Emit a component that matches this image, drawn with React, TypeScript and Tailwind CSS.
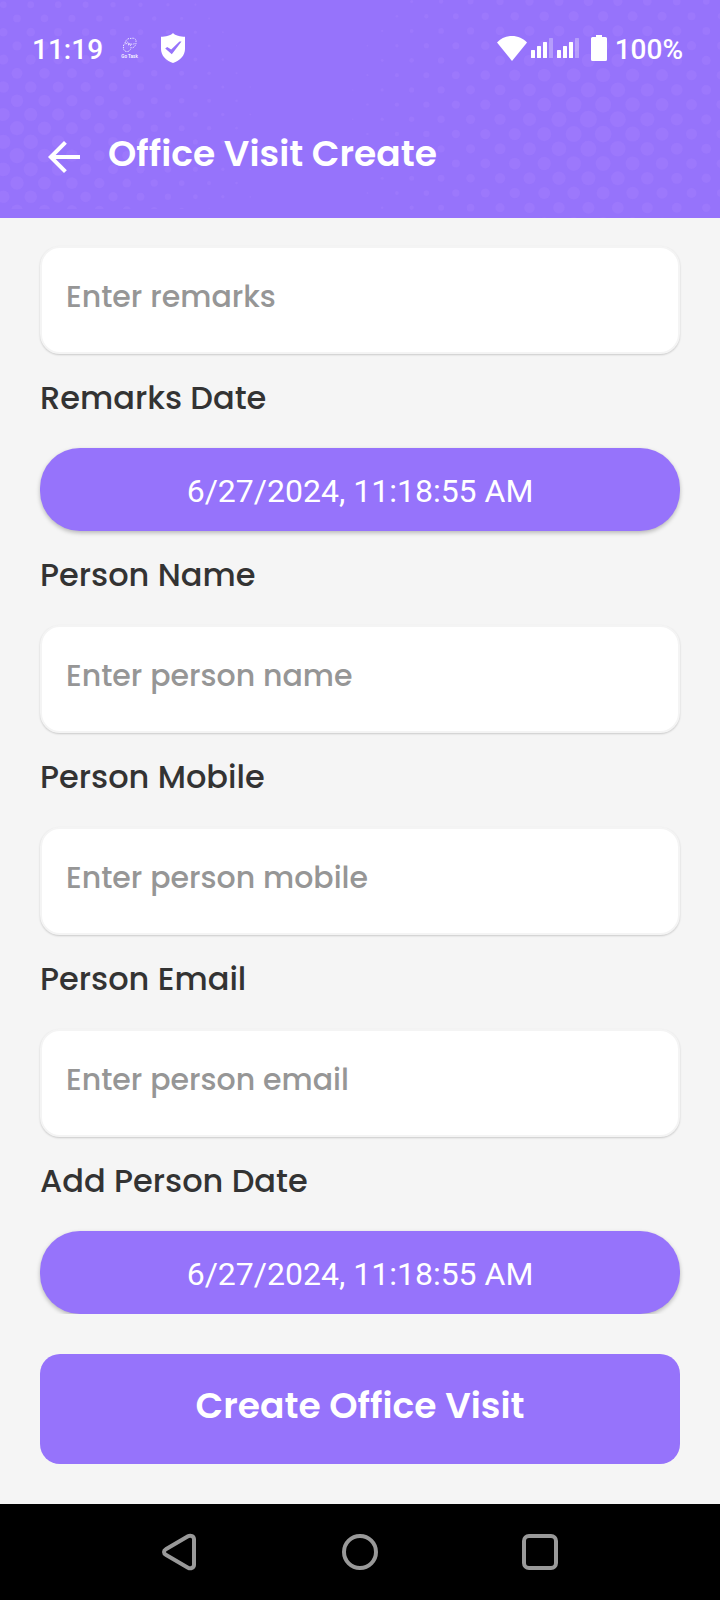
type Dot = { x: number; y: number; r: number };

function halftone(x0: number, y0: number, step: number, cx: number, cy: number, peak: number, slope: number, minX: number, maxX: number): Dot[] {
  const dots: Dot[] = [];
  for (let row = 0; y0 + row * step < 226; row++) {
    const y = y0 + row * step;
    for (let x = x0 + (row % 2) * step; x < maxX; x += step * 2) {
      const r = peak - slope * Math.hypot(x - cx, y - cy);
      if (x >= minX && r > 0.7) dots.push({ x, y, r });
    }
  }
  return dots;
}

const LEFT_DOTS = halftone(3.3, 4.7, 13.72, 20, 150, 7.7, 0.029, 0, 290);
const RIGHT_DOTS = halftone(293.8, 1.5, 14.73, 595, 125, 8.8, 0.033, 290, 730);

function HeaderPattern() {
  return (
    <svg className="absolute inset-0 h-full w-full fill-[#9c78fc]" viewBox="0 0 720 218" aria-hidden="true">
      <clipPath id="left-area">
        <rect width="300" height="209" />
      </clipPath>
      <g clipPath="url(#left-area)">
        {LEFT_DOTS.map((d, i) => (
          <circle key={i} cx={d.x} cy={d.y} r={d.r} />
        ))}
      </g>
      {RIGHT_DOTS.map((d, i) => (
        <circle key={i} cx={d.x} cy={d.y} r={d.r} />
      ))}
    </svg>
  );
}

function GoTaskIcon() {
  return (
    <svg className="ml-[18px] h-[22px] w-[18px]" viewBox="0 0 18 22" fill="none" stroke="#fff" strokeWidth="0.8" strokeDasharray="1.4 1">
      <path d="M4 6C5 2 8 1 10 1.500c3-1 5.500.5 5 3 .5 3-1.500 6-4 6.500" />
      <path d="M2.500 8c1.500-2 5-2 7 .5 1.500 2 0 5-2.500 6-3 .5-5-1.500-4.500-4.500Z" />
      <path d="M6 4.500c1 2.500 5 3.500 8 2M7 8l3-1" />
      <text x="0.3" y="21" textLength="16.500" lengthAdjust="spacingAndGlyphs" fontSize="5" stroke="none" fill="#fff" className="font-['Roboto',sans-serif]">
        Go Task
      </text>
    </svg>
  );
}

function ShieldIcon() {
  return (
    <svg className="ml-[22px] h-[30px] w-6" viewBox="0 0 24 30">
      <path fill="#fff" d="M12 0c1.200 1.300 3 2.200 5 2.700 2.500.7 5 1 7 1V16c0 6.500-5 11.500-12 14C5 27.500 0 22.500 0 16V3.700c2 0 4.500-.3 7-1C9 2.200 10.800 1.300 12 0Z" />
      <path fill="#9673fb" d="M4.200 15.600 6.200 14l4 2.600 8.300-8h2L10.800 21.300Z" />
    </svg>
  );
}

function WifiIcon() {
  return (
    <svg className="h-[25px] w-[30px]" viewBox="0 0 30 25" fill="#fff">
      <path d="M15 25 0 6.500C3.800 2.500 9 0 15 0s11.200 2.500 15 6.500Z" />
    </svg>
  );
}

function SignalIcon() {
  return (
    <svg className="ml-1 h-5 w-[22px]" viewBox="0 0 22 20" fill="#fff">
      <rect y="12" width="4" height="8" rx="0.500" />
      <rect x="6" y="8" width="4" height="12" rx="0.500" />
      <rect x="12" y="4" width="4" height="16" rx="0.500" />
      <rect x="18" width="4" height="20" rx="0.500" opacity="0.300" />
    </svg>
  );
}

function BatteryIcon() {
  return (
    <svg className="ml-3 h-[26px] w-4" viewBox="0 0 16 26" fill="#fff">
      <path d="M5 0h6v2h3.500A1.500 1.500 0 0 1 16 3.500v21a1.500 1.500 0 0 1-1.500 1.500h-13A1.500 1.500 0 0 1 0 24.500v-21A1.500 1.500 0 0 1 1.500 2H5Z" />
    </svg>
  );
}

function StatusBar() {
  return (
    <div className="relative flex h-24 items-center justify-between pr-[37px] pl-8 font-['Roboto',sans-serif] text-[28px] font-medium text-white">
      <div className="flex items-center">
        <span className="pt-[3px] leading-8">11:19</span>
        <GoTaskIcon />
        <ShieldIcon />
      </div>
      <div className="flex items-center">
        <WifiIcon />
        <SignalIcon />
        <SignalIcon />
        <BatteryIcon />
        <span className="ml-2 pt-[3px] leading-8">100%</span>
      </div>
    </div>
  );
}

function Header() {
  return (
    <header className="relative h-[218px] bg-[#9673fb]">
      <HeaderPattern />
      <StatusBar />
      <div className="relative flex h-[122px] items-start pl-10 text-white">
        <button className="mt-[37px]" aria-label="Back">
          <svg className="h-12 w-12" viewBox="0 0 24 24" fill="currentColor">
            <path d="M20 11H7.830l5.590-5.590L12 4l-8 8 8 8 1.410-1.410L7.830 13H20v-2z" />
          </svg>
        </button>
        <h1 className="mt-[31px] ml-5 text-[36px] leading-[54px] font-semibold tracking-[0.04px]">Office Visit Create</h1>
      </div>
    </header>
  );
}

function Label({ children }: { children: string }) {
  return <label className="block h-[94px] pt-5 text-[32px] leading-[48px] font-medium text-[#333333]">{children}</label>;
}

function Field({ placeholder }: { placeholder: string }) {
  return (
    <div className="h-[108px] rounded-[20px] border-2 border-[#f4f4f4] bg-white shadow-[0_1px_2px_rgba(0,0,0,0.18)]">
      <input className="h-full w-full bg-transparent pb-[7px] pl-6 text-[30px] font-medium outline-none placeholder:text-[#969696]" placeholder={placeholder} />
    </div>
  );
}

function DateButton({ value }: { value: string }) {
  return (
    <button className="block h-[83px] w-full rounded-[40px] bg-[#9673fb] pt-[3px] text-center font-['Roboto',sans-serif] text-[32px] text-white shadow-[0_2px_4px_rgba(0,0,0,0.25)]">
      {value}
    </button>
  );
}

function NavBar() {
  return (
    <nav className="flex h-24 items-center justify-center gap-[140px] bg-black">
      <svg className="h-10 w-10" viewBox="0 0 40 40" fill="none" stroke="#999" strokeWidth="4" strokeLinejoin="round">
        <path d="M5.800 17.300 28 4.300c2.500-1.400 6-.2 6 3v25.400c0 3.200-3.500 4.400-6 3L5.800 22.700c-2.400-1.300-2.400-4.100 0-5.400Z" />
      </svg>
      <svg className="h-10 w-10" viewBox="0 0 40 40" fill="none" stroke="#999" strokeWidth="4">
        <circle cx="20" cy="20" r="16" />
      </svg>
      <svg className="h-10 w-10" viewBox="0 0 40 40" fill="none" stroke="#999" strokeWidth="4">
        <rect x="4" y="4" width="32" height="32" rx="5" />
      </svg>
    </nav>
  );
}

export default function App() {
  return (
    <div className="flex h-[1600px] w-[720px] flex-col overflow-hidden bg-[#f5f5f5] font-['Poppins','Montserrat','Inter',sans-serif]">
      <Header />
      <main className="flex-1">
        <div className="h-[1096px] overflow-hidden px-10 pt-7">
          <Field placeholder="Enter remarks" />
          <Label>Remarks Date</Label>
          <DateButton value="6/27/2024, 11:18:55 AM" />
          <Label>Person Name</Label>
          <Field placeholder="Enter person name" />
          <Label>Person Mobile</Label>
          <Field placeholder="Enter person mobile" />
          <Label>Person Email</Label>
          <Field placeholder="Enter person email" />
          <Label>Add Person Date</Label>
          <DateButton value="6/27/2024, 11:18:55 AM" />
        </div>
        <div className="px-10 pt-10">
          <button className="block h-[110px] w-full rounded-[20px] bg-[#9673fb] pb-[7px] text-[36px] font-semibold tracking-[0.04px] text-white">
            Create Office Visit
          </button>
        </div>
      </main>
      <NavBar />
    </div>
  );
}
